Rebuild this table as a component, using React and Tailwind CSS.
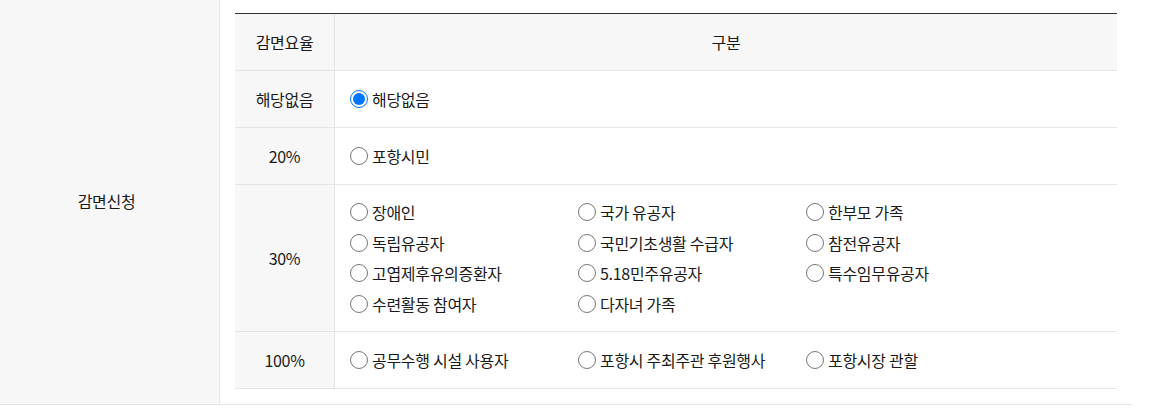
import React from 'react';

const rows = [
  { rate: '해당없음', options: [{ label: '해당없음', checked: true }] },
  { rate: '20%', options: [{ label: '포항시민' }] },
  {
    rate: '30%',
    options: [
      { label: '장애인' },
      { label: '국가 유공자' },
      { label: '한부모 가족' },
      { label: '독립유공자' },
      { label: '국민기초생활 수급자' },
      { label: '참전유공자' },
      { label: '고엽제후유의증환자' },
      { label: '5.18민주유공자' },
      { label: '특수임무유공자' },
      { label: '수련활동 참여자' },
      { label: '다자녀 가족' },
    ],
  },
  {
    rate: '100%',
    options: [
      { label: '공무수행 시설 사용자' },
      { label: '포항시 주최주관 후원행사' },
      { label: '포항시장 관할' },
    ],
  },
];

function Radio({ label, checked }) {
  return (
    <label className="flex items-center gap-[4px] leading-[30.5px] cursor-pointer">
      {checked ? (
        <span className="w-[18px] h-[18px] rounded-full border border-[#0075ff] flex items-center justify-center shrink-0">
          <span className="w-[12px] h-[12px] rounded-full bg-[#0075ff]" />
        </span>
      ) : (
        <span className="w-[18px] h-[18px] rounded-full border border-[#767676] bg-white shrink-0" />
      )}
      <span>{label}</span>
    </label>
  );
}

export default function App() {
  return (
    <div
      className="bg-white text-[#1a1a1a] text-[16px] tracking-[-0.3px] min-h-[410px]"
      style={{ fontFamily: '"Noto Sans CJK KR", "Noto Sans", sans-serif' }}
    >
      <div className="flex w-[1132px] border-b border-[#e5e5e5]">
        {/* 항목명 */}
        <div className="w-[220px] shrink-0 bg-[#f7f7f7] border-r border-[#e5e5e5] flex items-center justify-center pr-[6px] pb-[3px]">
          감면신청
        </div>

        {/* 감면 선택표 */}
        <div className="flex-1 px-[15px] pt-[13px] pb-[15px]">
          <div className="border-t border-[#333]">
            <div className="flex h-[57px] border-b border-[#e5e5e5] bg-[#f7f7f7]">
              <div className="w-[100px] shrink-0 border-r border-[#e5e5e5] flex items-center justify-center">
                감면요율
              </div>
              <div className="flex-1 flex items-center justify-center">구분</div>
            </div>

            {rows.map((row) => (
              <div key={row.rate} className="flex border-b border-[#e5e5e5] min-h-[57px]">
                <div className="w-[100px] shrink-0 bg-[#f7f7f7] border-r border-[#e5e5e5] flex items-center justify-center">
                  {row.rate}
                </div>
                <div
                  className={
                    row.options.length > 3
                      ? 'flex-1 pl-[15px] pt-[12px] pb-[12px]'
                      : 'flex-1 pl-[15px] flex items-center'
                  }
                >
                  <div className="grid grid-cols-[228px_228px_228px]">
                    {row.options.map((opt) => (
                      <Radio key={opt.label} label={opt.label} checked={opt.checked} />
                    ))}
                  </div>
                </div>
              </div>
            ))}
          </div>
        </div>
      </div>
    </div>
  );
}
